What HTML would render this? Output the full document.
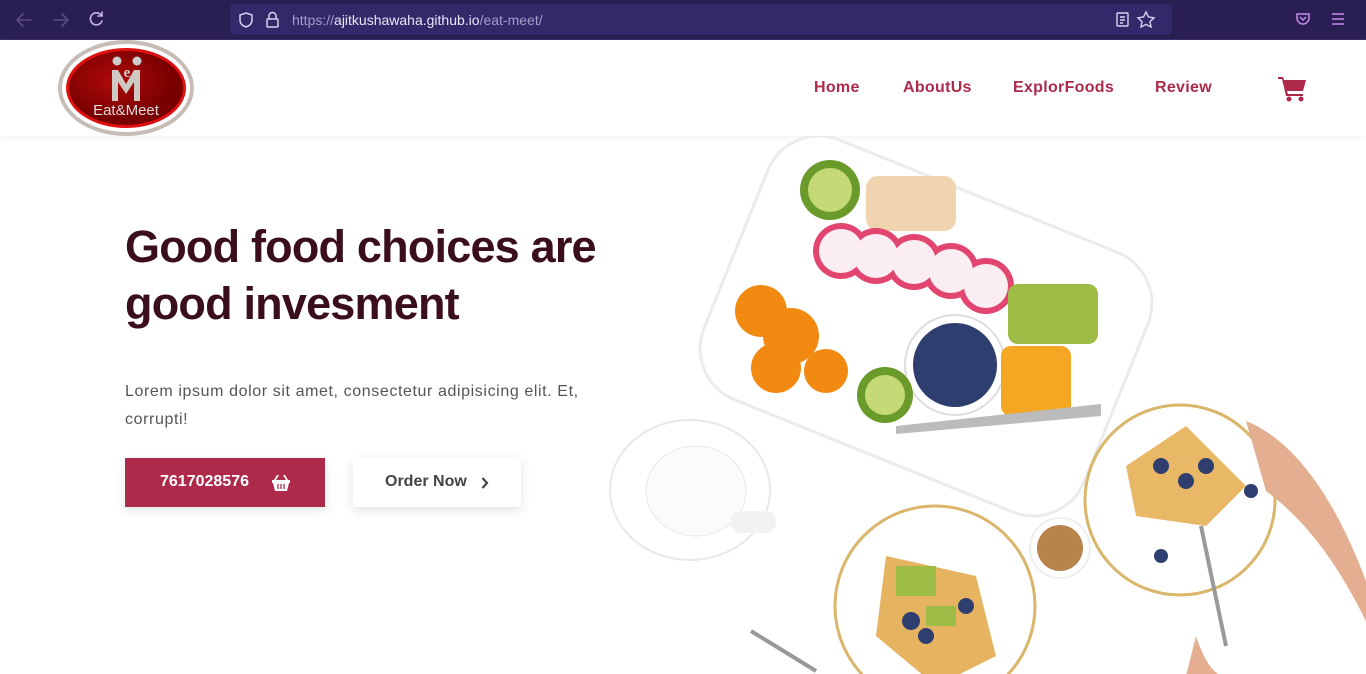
<!DOCTYPE html>
<html><head><meta charset="utf-8">
<style>
*{margin:0;padding:0;box-sizing:border-box}
html,body{width:1366px;height:674px;overflow:hidden}
body{background:#fff;font-family:"Liberation Sans",sans-serif;position:relative}
.bar{position:absolute;left:0;top:0;width:1366px;height:40px;background:#2a1f52;border-bottom:1px solid #3d2f6e}
.url{position:absolute;left:230px;top:4px;width:942px;height:31px;background:#33296a;border-radius:4px}
.url span{position:absolute;left:62px;top:8px;font-size:14px;color:#a59cc7}
.url b{font-weight:normal;color:#e8e4f7}
.hdr{position:absolute;top:40px;left:0;width:1366px;height:96px;background:#fff;box-shadow:0 2px 6px rgba(0,0,0,.05)}
.nav a{position:absolute;top:79px;font-weight:bold;font-size:16px;color:#ad2a4b;text-decoration:none;letter-spacing:.3px}
h1{position:absolute;left:125px;top:218px;font-size:45px;line-height:57px;color:#3b0e1b;font-weight:bold;letter-spacing:-.8px}
p{position:absolute;left:125px;top:378px;width:500px;font-size:16px;line-height:28px;color:#555;letter-spacing:.6px}
.b1{position:absolute;left:125px;top:458px;width:200px;height:49px;background:#ad2a4b;color:#fff;font-weight:bold;font-size:16px;box-shadow:0 4px 10px rgba(0,0,0,.1)}
.b2{position:absolute;left:353px;top:458px;width:168px;height:49px;background:#fff;color:#444;font-weight:bold;font-size:16px;box-shadow:0 3px 10px rgba(0,0,0,.12)}
</style></head><body>
<div class="bar">
<svg width="120" height="40" style="position:absolute;left:0;top:0" fill="none" stroke-width="1.6" stroke-linecap="round">
<path d="M31 20H17M23 14l-6 6 6 6" stroke="#5a4e85"/><path d="M54 20h14M62 14l6 6-6 6" stroke="#5a4e85"/>
<path d="M101 15a6 6 0 1 0 1 6M102 12v4h-4" stroke="#c9b3f5"/></svg>
<div class="url">
<svg width="60" height="31" fill="none" stroke="#d8d2ee" stroke-width="1.5"><path d="M16 9l6 2v5c0 4-3 6-6 7-3-1-6-3-6-7v-5z"/><rect x="37" y="15" width="11" height="8" rx="1"/><path d="M39 15v-3a3.5 3.5 0 0 1 7 0v3"/></svg>
<span>https://<b>ajitkushawaha.github.io</b>/eat-meet/</span>
<svg width="60" height="31" style="position:absolute;right:0;top:0" fill="none" stroke="#d8d2ee" stroke-width="1.4"><rect x="5" y="9" width="11" height="13" rx="1"/><path d="M8 13h5M8 16h5M8 19h3"/><path d="M34 8l2.5 5 5.5.8-4 3.8 1 5.4-5-2.6-5 2.6 1-5.4-4-3.8 5.5-.8z"/></svg>
</div>
<svg width="70" height="40" style="position:absolute;right:0;top:0" fill="none" stroke="#c78af0" stroke-width="1.5"><path d="M1 13h12v4a6 6 0 0 1-12 0z" transform="translate(0,1)"/><path d="M4 17l3 3 3-3"/><path d="M36 14h12M36 19h12M36 24h12"/></svg>
</div>
<div class="hdr">
<svg width="140" height="100" style="position:absolute;left:57px;top:0">
<defs><radialGradient id="g" cx=".4" cy=".4"><stop offset="0" stop-color="#b00a0a"/><stop offset="1" stop-color="#7a0000"/></radialGradient></defs>
<ellipse cx="69" cy="48" rx="68" ry="48" fill="#c7bdb6"/><ellipse cx="69" cy="48" rx="64" ry="44" fill="#fff"/>
<ellipse cx="69" cy="48" rx="60" ry="40" fill="#e01010"/><ellipse cx="69" cy="48" rx="57" ry="37" fill="url(#g)"/>
<circle cx="60" cy="21" r="4.5" fill="#ccc"/><circle cx="80" cy="21" r="4.5" fill="#ccc"/>
<path d="M55 61V30h6l8 14 8-14h6v31h-6V42l-8 12-8-12v19z" fill="#cfc9c4"/>
<text x="70" y="37" text-anchor="middle" font-family="Liberation Serif" font-weight="bold" font-size="15" fill="#d5d0cc">e</text>
<text x="69" y="75" text-anchor="middle" font-family="Liberation Sans" font-size="15" fill="#ddd">Eat&amp;Meet</text>
</svg>
</div>
<div class="nav"><a style="left:814px">Home</a><a style="left:903px">AboutUs</a><a style="left:1013px">ExplorFoods</a><a style="left:1155px">Review</a></div>
<svg width="30" height="28" style="position:absolute;left:1278px;top:75px"><path d="M0 2h5l1 3h22l-3 11H9l1 3h15v2H8L4 4H0z" fill="#ad2a4b"/><circle cx="11" cy="24" r="2.5" fill="#ad2a4b"/><circle cx="23" cy="24" r="2.5" fill="#ad2a4b"/></svg>

<svg width="820" height="538" style="position:absolute;left:546px;top:136px">
<g transform="rotate(22 380 190)"><rect x="175" y="50" width="410" height="280" rx="55" fill="#fff" stroke="#ebebeb" stroke-width="3"/></g>
<circle cx="284" cy="54" r="30" fill="#6a9a2a"/><circle cx="284" cy="54" r="22" fill="#c5d977"/>
<rect x="320" y="40" width="90" height="55" rx="12" fill="#f0d4b0"/>
<g fill="#e2456f"><circle cx="295" cy="115" r="28"/><circle cx="330" cy="120" r="28"/><circle cx="368" cy="126" r="28"/><circle cx="405" cy="135" r="28"/><circle cx="440" cy="150" r="28"/></g>
<g fill="#fbeef2"><circle cx="295" cy="115" r="22"/><circle cx="330" cy="120" r="22"/><circle cx="368" cy="126" r="22"/><circle cx="405" cy="135" r="22"/><circle cx="440" cy="150" r="22"/></g>
<g fill="#f28a12"><circle cx="215" cy="175" r="26"/><circle cx="245" cy="200" r="28"/><circle cx="230" cy="232" r="25"/><circle cx="280" cy="235" r="22"/></g>
<rect x="462" y="148" width="90" height="60" rx="10" fill="#9cbc45"/>
<circle cx="409" cy="229" r="50" fill="#fff" stroke="#ddd" stroke-width="2"/><circle cx="409" cy="229" r="42" fill="#2e3e6e"/>
<rect x="455" y="210" width="70" height="70" rx="10" fill="#f5a623"/>
<circle cx="339" cy="259" r="28" fill="#6a9a2a"/><circle cx="339" cy="259" r="20" fill="#c5d977"/>
<path d="M350 290l205-22v12l-205 18z" fill="#bbb"/>
<ellipse cx="144" cy="354" rx="80" ry="70" fill="#fff" stroke="#e8e8e8" stroke-width="2"/><ellipse cx="150" cy="355" rx="50" ry="45" fill="#fbfbfb" stroke="#e6e6e6"/>
<rect x="185" y="375" width="45" height="22" rx="10" fill="#f2f2f2"/>
<circle cx="634" cy="364" r="95" fill="#fff" stroke="#d9b66a" stroke-width="3"/><path d="M580 330l60-40 60 60-40 40-70-10z" fill="#e8b866"/>
<g fill="#2e3e6e"><circle cx="615" cy="330" r="8"/><circle cx="640" cy="345" r="8"/><circle cx="660" cy="330" r="8"/><circle cx="705" cy="355" r="7"/><circle cx="615" cy="420" r="7"/></g>
<circle cx="514" cy="412" r="30" fill="#fff" stroke="#eee" stroke-width="2"/><circle cx="514" cy="412" r="23" fill="#b7844c"/>
<circle cx="389" cy="470" r="100" fill="#fff" stroke="#d9b66a" stroke-width="3"/><path d="M340 420l90 20 20 80-60 30-60-50z" fill="#e6b461"/>
<g fill="#9cbc45"><rect x="350" y="430" width="40" height="30"/><rect x="380" y="470" width="30" height="20"/></g>
<g fill="#2e3e6e"><circle cx="365" cy="485" r="9"/><circle cx="420" cy="470" r="8"/><circle cx="380" cy="500" r="8"/></g>
<path d="M700 285c50 20 90 80 120 160v40c-30-60-60-100-100-130z" fill="#e4ae90"/>
<path d="M650 500c10 30 20 40 30 40h-40z" fill="#e4ae90"/>
<path d="M655 390l25 120" stroke="#999" stroke-width="4"/><path d="M205 495l65 40" stroke="#999" stroke-width="4"/>
</svg>

<h1>Good food choices are<br>good invesment</h1>
<p>Lorem ipsum dolor sit amet, consectetur adipisicing elit. Et, corrupti!</p>
<div class="b1"><span style="position:absolute;left:35px;top:15px">7617028576</span>
<svg width="18" height="16" style="position:absolute;left:147px;top:17px"><path d="M0 5h18v3h-1l-2 8H3L1 8H0z M5 0L2 5h2l3-5zM13 0l3 5h-2l-3-5z" fill="#fff"/><path d="M6 9v5M9 9v5M12 9v5" stroke="#ad2a4b" stroke-width="1.3"/></svg></div>
<div class="b2"><span style="position:absolute;left:32px;top:15px">Order Now</span>
<svg width="8" height="12" style="position:absolute;left:128px;top:19px"><path d="M1.5 1l4.5 5-4.5 5" stroke="#444" stroke-width="2.2" fill="none"/></svg></div>
</body></html>
